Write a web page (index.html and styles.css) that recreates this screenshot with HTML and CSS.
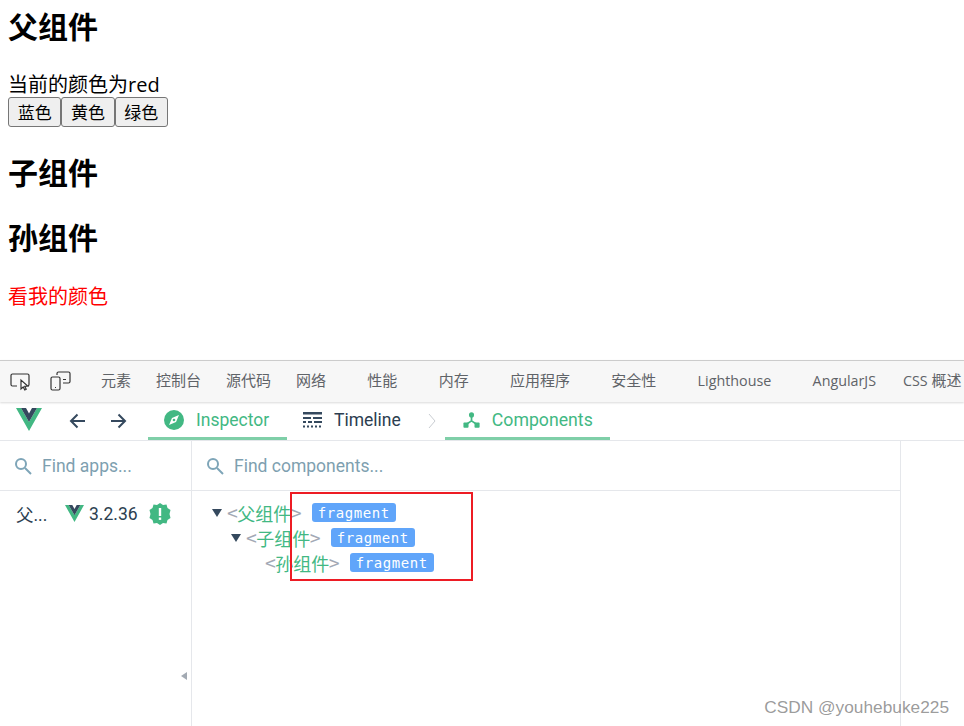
FILE: index.html
```html
<!DOCTYPE html>
<html lang="zh">
<head>
<meta charset="utf-8">
<title>Vue provide inject</title>
<link rel="stylesheet" href="styles.css">
</head>
<body>
<main class="page">
  <h2 class="first">父组件</h2>
  <div>当前的颜色为red</div>
  <div class="btns"><button>蓝色</button><button>黄色</button><button>绿色</button></div>
  <h2>子组件</h2>
  <h2>孙组件</h2>
  <div class="red">看我的颜色</div>
</main>
<section class="devtools">
  <nav class="toolbar">
    <span class="tool-icons">
      <svg width="22" height="20" viewBox="0 0 22 20" fill="none" stroke="#333" stroke-width="1.2"><path d="M7 15H2.500A1.500 1.500 0 0 1 1 13.500V4.500A1.500 1.500 0 0 1 2.500 3h15A1.500 1.500 0 0 1 19 4.500V13.500a1.500 1.500 0 0 1-1 1.400"/><path d="M11 9l0 9 2.200-2 1.600 3 1.400-.7-1.500-3 3-.2z" fill="#fff"/></svg>
      <svg width="22" height="20" viewBox="0 0 22 20" fill="none" stroke="#333" stroke-width="1.200"><path d="M7 4V2.500A1.500 1.500 0 0 1 8.500 1h10A1.500 1.500 0 0 1 20 2.500v8a1.500 1.500 0 0 1-1.500 1.500H13"/><rect x="1" y="6" width="9" height="13" rx="1.500"/><path d="M5 16.500h1M13 8.500h3"/></svg>
    </span>
    <span class="dt-tab">元素</span><span class="dt-tab">控制台</span><span class="dt-tab">源代码</span><span class="dt-tab wide">网络</span><span class="dt-tab wide">性能</span><span class="dt-tab wide">内存</span><span class="dt-tab wide">应用程序</span><span class="dt-tab wide">安全性</span><span class="dt-tab wide latin">Lighthouse</span><span class="dt-tab angular latin">AngularJS</span><span class="dt-tab"><span class="latin">CSS</span> 概述</span>
  </nav>
  <header class="vue-head">
    <svg class="logo" width="26" height="23" viewBox="0 0 26 23"><path d="M0 0h5l8 14L21 0h5L13 23z" fill="#42b883"/><path d="M5 0h5l3 5.500L16 0h5L13 14z" fill="#35495e"/></svg>
    <svg class="arrow" width="18" height="18" viewBox="0 0 18 18" fill="none" stroke="#35495e" stroke-width="2"><path d="M16 9H2M8.500 2.500L2 9l6.500 6.500"/></svg>
    <svg class="arrow second" width="18" height="18" viewBox="0 0 18 18" fill="none" stroke="#35495e" stroke-width="2"><path d="M2 9h14M9.500 2.500L16 9l-6.500 6.500"/></svg>
    <span class="v-tab active first-tab">
      <svg width="20" height="20" viewBox="0 0 20 20"><circle cx="10" cy="10" r="10" fill="#42b883"/><path d="M15 5l-3 7-7 3 3-7z" fill="#fff"/><circle cx="10" cy="10" r="1.300" fill="#42b883"/></svg>
      <span>Inspector</span>
    </span>
    <span class="v-tab timeline">
      <svg width="19" height="16" viewBox="0 0 19 16" fill="#35495e"><rect width="19" height="2.500"/><rect y="5" width="8" height="2"/><rect x="10" y="5" width="9" height="2"/><rect y="9" width="3" height="2"/><rect x="5" y="9" width="4" height="2"/><rect x="11" y="9" width="8" height="2"/><rect y="13.500" width="2" height="2"/><rect x="4" y="13.500" width="2" height="2"/><rect x="8" y="13.500" width="2" height="2"/><rect x="12" y="13.500" width="2" height="2"/><rect x="16" y="13.500" width="2" height="2"/></svg>
      <span>Timeline</span>
    </span>
    <svg class="chev" width="8" height="16" viewBox="0 0 8 16" fill="none" stroke="#c9cdd2" stroke-width="1"><path d="M1 1l6 7-6 7"/></svg>
    <span class="v-tab active last-tab">
      <svg width="18" height="18" viewBox="0 0 20 20" fill="#42b883"><circle cx="10" cy="4" r="3"/><rect x="0.500" y="13" width="6" height="6" rx="1"/><rect x="13.500" y="13" width="6" height="6" rx="1"/><path d="M10 6v5l-6 4M10 11l6 4" stroke="#42b883" stroke-width="2" fill="none"/></svg>
      <span>Components</span>
    </span>
  </header>
  <div class="panes">
    <aside class="apps">
      <div class="search">
        <svg class="mag" width="18" height="18" viewBox="0 0 18 18" fill="none" stroke="#7ea5b8" stroke-width="2"><circle cx="7" cy="7" r="5"/><path d="M11 11l6 6"/></svg>
        <span>Find apps...</span>
      </div>
      <div class="app-row">
        <span class="app-name">父...</span>
        <svg width="19" height="17" viewBox="0 0 26 23"><path d="M0 0h5l8 14L21 0h5L13 23z" fill="#42b883"/><path d="M5 0h5l3 5.500L16 0h5L13 14z" fill="#35495e"/></svg>
        <span class="ver">3.2.36</span>
        <svg class="seal" width="22" height="22" viewBox="0 0 22 22"><path d="M11 0l3 2 3.500-.5 1 3.500 3 2L20.500 11l1 4-3 2-1 3.500L14 20l-3 2-3-2-3.500.5-1-3.500-3-2 1-4-1-4 3-2 1-3.500L8 2z" fill="#42b883"/><rect x="9.800" y="5" width="2.400" height="8" fill="#fff"/><rect x="9.800" y="14.500" width="2.400" height="2.400" fill="#fff"/></svg>
      </div>
      <span class="collapse"></span>
    </aside>
    <div class="tree-pane">
      <div class="search">
        <svg class="mag" width="18" height="18" viewBox="0 0 18 18" fill="none" stroke="#7ea5b8" stroke-width="2"><circle cx="7" cy="7" r="5"/><path d="M11 11l6 6"/></svg>
        <span>Find components...</span>
      </div>
      <ul class="tree">
        <li class="node lv0"><i class="tri"></i><span class="br">&lt;</span><span class="nm">父组件</span><span class="br">&gt;</span><b class="badge">fragment</b></li>
        <li class="node lv1"><i class="tri"></i><span class="br">&lt;</span><span class="nm">子组件</span><span class="br">&gt;</span><b class="badge">fragment</b></li>
        <li class="node lv2"><span class="br">&lt;</span><span class="nm">孙组件</span><span class="br">&gt;</span><b class="badge">fragment</b></li>
      </ul>
    </div>
    <div class="detail"></div>
  </div>
</section>
<div class="redbox"></div>
<div class="mark">CSDN @youhebuke225</div>
</body>
</html>
```
FILE: styles.css
```css
* { box-sizing: border-box; }
html, body { margin: 0; height: 726px; overflow: hidden; background: #fff; }
body { font-family: "Open Sans", "Noto Sans CJK SC", sans-serif; position: relative; display: flex; flex-direction: column; }
.page { height: 360px; padding: 0 8px; font-size: 20px; line-height: 23px; color: #000; }
h2 { font-size: 30px; line-height: 34px; margin: 0; font-weight: bold; }
h2.first { padding-top: 10px; margin-bottom: 29px; }
.btns { height: 30px; display: flex; margin-top: 1px; }
button { width: 53.330px; height: 30px; padding: 0 0 2px; font: 17px "Open Sans", "Noto Sans CJK SC", sans-serif; background: #efefef; border: 1px solid #767676; border-radius: 3px; color: #000; }
.btns + h2 { margin-top: 29px; }
h2 + h2 { margin-top: 31px; }
.red { color: #f00; margin-top: 30px; }
.devtools { flex: 1; display: flex; flex-direction: column; min-height: 0; }
.toolbar { height: 42px; flex: none; display: flex; align-items: center; background: #f7f7f7; border-top: 1px solid #ccc; box-shadow: 0 1px 2px rgba(0,0,0,.15); position: relative; font: 15px/19px "Open Sans", "Noto Sans CJK SC", sans-serif; color: #5f6368; white-space: nowrap; padding-bottom: 2px; }
.latin { font-size: 14.300px; }
.tool-icons { display: flex; gap: 18px; width: 101px; padding-left: 10px; flex: none; }
.dt-tab { margin-right: 25px; flex: none; }
.dt-tab.wide { margin-right: 41.300px; }
.dt-tab.angular { margin-right: 27px; }
.vue-head { height: 39px; flex: none; display: flex; align-items: stretch; border-bottom: 1px solid #e5e7eb; font: 17.500px Roboto, sans-serif; color: #2c3e50; }
.logo { margin: 6px 0 0 16px; }
.arrow { margin: 10px 0 0 27px; }
.arrow.second { margin-left: 22px; }
.v-tab { display: flex; align-items: center; gap: 12px; padding: 0 17px 0 16px; border-bottom: 3px solid transparent; height: 38px; }
.v-tab.active { color: #42b883; border-bottom-color: #7fcfa8; }
.first-tab { margin-left: 21px; width: 139px; }
.chev { margin: 11px 0 0 10px; }
.last-tab { margin-left: 9px; width: 165px; gap: 12px; padding-left: 18px; font-size: 17.700px; }
.panes { flex: 1; display: flex; min-height: 0; }
.apps { width: 192px; flex: none; border-right: 1px solid #e5e7eb; position: relative; }
.tree-pane { flex: 1; border-right: 1px solid #e5e7eb; }
.detail { width: 63px; flex: none; }
.search { height: 50px; display: flex; align-items: center; gap: 10px; padding-left: 14px; border-bottom: 1px solid #e5e7eb; font: 17.500px Roboto, sans-serif; color: #7e9fb0; }
.app-row { display: flex; align-items: center; height: 45px; padding-left: 16px; font: 17.500px Roboto, "Noto Sans CJK SC", sans-serif; color: #2c3e50; }
.app-name { width: 49px; }
.ver { margin-left: 5px; }
.seal { margin-left: 11px; }
.collapse { position: absolute; left: 181px; top: 231px; border: 4px solid transparent; border-right: 6px solid #a3aab3; border-left: 0; }
.tree { list-style: none; margin: 0; padding: 9px 0 0; font: 18px "DejaVu Sans Mono", "Noto Sans CJK SC", monospace; }
.node { display: flex; align-items: center; height: 25px; }
.lv0 { padding-left: 20px; }
.lv1 { padding-left: 39px; }
.lv2 { padding-left: 73px; }
.tri { width: 0; margin-right: 5px; border: 5px solid transparent; border-top: 8px solid #35495e; border-bottom: 0; }
.br { color: #a3a9b5; }
.nm { color: #42b883; margin: 0 -.5px 0 -.5px; }
.badge { margin-left: 10px; height: 19px; width: 84px; text-align: center; font: normal 14px/20px "DejaVu Sans Mono", monospace; letter-spacing: .57px; color: #fff; background: #60a5fa; border-radius: 3px; }
.redbox { position: absolute; left: 290px; top: 492px; width: 183px; height: 89px; border: 2px solid #ed1c24; }
.mark { position: absolute; right: 15px; top: 697px; font: 17.300px/20px "Liberation Sans", sans-serif; color: rgba(90,90,90,.62); }
```
